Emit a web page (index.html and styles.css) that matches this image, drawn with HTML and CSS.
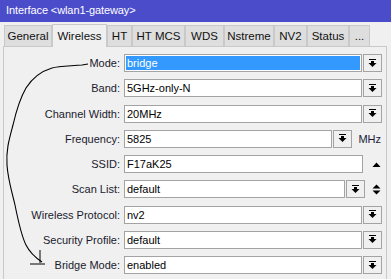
FILE: index.html
```html
<!DOCTYPE html>
<html lang="en">
<head>
  <meta charset="UTF-8" />
  <title>Interface &lt;wlan1-gateway&gt;</title>
  <link rel="stylesheet" href="styles.css">
</head>
<body>
  <div class="window">
    <div class="titlebar">Interface &lt;wlan1-gateway&gt;</div>

    <div class="tabs">
      <div class="tab t-general">General</div>
      <div class="tab t-wireless active">Wireless</div>
      <div class="tab t-ht">HT</div>
      <div class="tab t-htmcs">HT MCS</div>
      <div class="tab t-wds">WDS</div>
      <div class="tab t-nstreme">Nstreme</div>
      <div class="tab t-nv2">NV2</div>
      <div class="tab t-status">Status</div>
      <div class="tab t-more">...</div>
    </div>

    <div class="panel">
      <div class="row">
        <label>Mode:</label>
        <div class="field selected">bridge</div>
        <div class="btn"><svg width="9" height="9" viewBox="0 0 9 9"><rect x="1" y="0" width="7" height="1"/><rect x="3" y="2" width="3" height="2"/><polygon points="0.5,4 8.5,4 4.5,8"/></svg></div>
      </div>
      <div class="row">
        <label>Band:</label>
        <div class="field">5GHz-only-N</div>
        <div class="btn"><svg width="9" height="9" viewBox="0 0 9 9"><rect x="1" y="0" width="7" height="1"/><rect x="3" y="2" width="3" height="2"/><polygon points="0.5,4 8.5,4 4.5,8"/></svg></div>
      </div>
      <div class="row">
        <label>Channel Width:</label>
        <div class="field">20MHz</div>
        <div class="btn"><svg width="9" height="9" viewBox="0 0 9 9"><rect x="1" y="0" width="7" height="1"/><rect x="3" y="2" width="3" height="2"/><polygon points="0.5,4 8.5,4 4.5,8"/></svg></div>
      </div>
      <div class="row">
        <label>Frequency:</label>
        <div class="field">5825</div>
        <div class="btn"><svg width="9" height="9" viewBox="0 0 9 9"><rect x="1" y="0" width="7" height="1"/><rect x="3" y="2" width="3" height="2"/><polygon points="0.5,4 8.5,4 4.5,8"/></svg></div>
        <div class="unit">MHz</div>
      </div>
      <div class="row">
        <label>SSID:</label>
        <div class="field">F17aK25</div>
        <div class="side"><svg width="9" height="5" viewBox="0 0 9 5"><polygon points="0.5,5 8.5,5 4.5,0.5"/></svg></div>
      </div>
      <div class="row">
        <label>Scan List:</label>
        <div class="field">default</div>
        <div class="btn"><svg width="9" height="9" viewBox="0 0 9 9"><rect x="1" y="0" width="7" height="1"/><rect x="3" y="2" width="3" height="2"/><polygon points="0.5,4 8.5,4 4.5,8"/></svg></div>
        <div class="side narrow"><svg width="9" height="11" viewBox="0 0 9 11"><polygon points="0.5,4.5 8.5,4.5 4.5,0.5"/><polygon points="0.5,6.5 8.5,6.5 4.5,10.5"/></svg></div>
      </div>
      <div class="row">
        <label>Wireless Protocol:</label>
        <div class="field">nv2</div>
        <div class="btn"><svg width="9" height="9" viewBox="0 0 9 9"><rect x="1" y="0" width="7" height="1"/><rect x="3" y="2" width="3" height="2"/><polygon points="0.5,4 8.5,4 4.5,8"/></svg></div>
      </div>
      <div class="row">
        <label>Security Profile:</label>
        <div class="field">default</div>
        <div class="btn"><svg width="9" height="9" viewBox="0 0 9 9"><rect x="1" y="0" width="7" height="1"/><rect x="3" y="2" width="3" height="2"/><polygon points="0.5,4 8.5,4 4.5,8"/></svg></div>
      </div>
      <div class="row">
        <label>Bridge Mode:</label>
        <div class="field">enabled</div>
        <div class="btn"><svg width="9" height="9" viewBox="0 0 9 9"><rect x="1" y="0" width="7" height="1"/><rect x="3" y="2" width="3" height="2"/><polygon points="0.5,4 8.5,4 4.5,8"/></svg></div>
      </div>
    </div>
  </div>

  <!-- hand drawn annotation from Mode to Bridge Mode -->
  <svg class="annotation" width="391" height="279" viewBox="0 0 391 279">
    <path d="M88 64 L82 65 C70 66 58 66 52 68 C42 71 33 77 26 88 C19 100 16 112 13 125 C9 140 6 150 7 165 C8 180 12 192 15 205 C18 220 21 235 26 245 C30 253 36 258 42 262" fill="none" stroke="#000" stroke-width="1.1"/>
    <path d="M30 264 L45 264 M40 250 L40 263" fill="none" stroke="#000" stroke-width="1"/>
  </svg>
</body>
</html>
```

FILE: styles.css
```css
body {
  margin: 0;
  background: #f0f0f0;
  font-family: "Liberation Sans", Arial, sans-serif;
  font-size: 11px;
  color: #111;
  width: 391px;
  height: 279px;
  overflow: hidden;
  position: relative;
}
.titlebar {
  height: 22px;
  line-height: 21px;
  background: #4b4cca;
  color: #fff;
  font-size: 11px;
  letter-spacing: -0.1px;
  padding-left: 6px;
}
.tabs {
  display: flex;
  align-items: flex-end;
  height: 24px;
  padding-left: 4px;
}
.tab {
  box-sizing: border-box;
  height: 21px;
  line-height: 20px;
  background: #dedede;
  border: 1px solid #c9c9c9;
  border-bottom: none;
  text-align: center;
  font-size: 11.5px;
  color: #111;
}
.tab.active {
  height: 23px;
  background: #f0f0f0;
  line-height: 22px;
  position: relative;
  top: 1px;
}
.t-general { width: 48px; }
.t-wireless { width: 55px; }
.t-ht { width: 25px; }
.t-htmcs { width: 53px; }
.t-wds { width: 39px; }
.t-nstreme { width: 50px; }
.t-nv2 { width: 33px; }
.t-status { width: 42px; }
.t-more { width: 21px; }
.panel {
  margin-left: 3px;
  width: 384px;
  height: 240px;
  box-sizing: border-box;
  border-top: 1px solid #c9c9c9;
  border-left: 1px solid #c9c9c9;
  border-right: 1px solid #c9c9c9;
  padding: 7px 4px 0 0;
  display: flex;
  flex-direction: column;
  gap: 7.25px;
}
.row {
  display: flex;
  align-items: center;
  height: 18px;
}
.row label {
  width: 116px;
  text-align: right;
  padding-right: 4px;
  flex: none;
  color: #1a1a2e;
}
.field {
  flex: 1;
  box-sizing: border-box;
  height: 18px;
  line-height: 16px;
  background: #fff;
  border: 1px solid #a3a3a3;
  padding-left: 2px;
  color: #000;
}
.field.selected {
  background: #3399ff;
  color: #fff;
  box-shadow: inset 0 0 0 1px #fff;
}
.btn {
  box-sizing: border-box;
  width: 19px;
  height: 18px;
  margin-left: 1px;
  border: 1px solid #a3a3a3;
  background: #f0f0f0;
  display: flex;
  align-items: center;
  justify-content: center;
  flex: none;
}
.side {
  width: 18px;
  height: 18px;
  display: flex;
  align-items: center;
  justify-content: flex-end;
  padding-right: 1px;
  flex: none;
}
.side.narrow {
  width: 16px;
}
.unit {
  width: 29px;
  text-align: right;
  padding-right: 1px;
  flex: none;
  color: #1a1a3a;
}
.annotation {
  position: absolute;
  left: 0;
  top: 0;
  pointer-events: none;
}
```
